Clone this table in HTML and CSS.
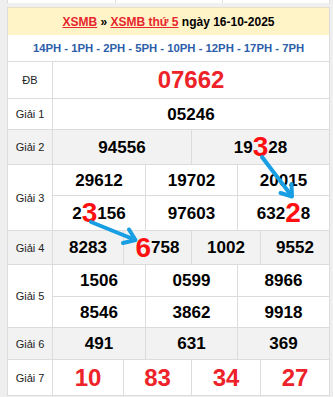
FILE: index.html
```html
<!DOCTYPE html>
<html lang="vi">
<head>
<meta charset="utf-8">
<title>XSMB thứ 5</title>
<link rel="stylesheet" href="styles.css">
</head>
<body>
<div class="page">
  <div class="prev"><span></span><span></span><span></span></div>
  <div class="box">
    <div class="head"><a class="lnk" href="#">XSMB</a> » <a class="lnk" href="#">XSMB thứ 5</a> ngày 16-10-2025</div>
    <div class="ph">14PH - 1PH - 2PH - 5PH - 10PH - 12PH - 17PH - 7PH</div>

    <div class="row r-db">
      <div class="lbl">ĐB</div>
      <div class="nums c1"><div class="cell red big">07662</div></div>
    </div>
    <div class="row r-g1">
      <div class="lbl">Giải 1</div>
      <div class="nums c1"><div class="cell">05246</div></div>
    </div>
    <div class="row alt r-g2">
      <div class="lbl">Giải 2</div>
      <div class="nums c2"><div class="cell">94556</div><div class="cell">19<b class="hl">3</b>28</div></div>
    </div>
    <div class="row r-g3">
      <div class="lbl">Giải 3</div>
      <div class="nums c3 g3">
        <div class="cell">29612</div><div class="cell">19702</div><div class="cell">20015</div>
        <div class="cell">2<b class="hl">3</b>156</div><div class="cell">97603</div><div class="cell">632<b class="hl">2</b>8</div>
      </div>
    </div>
    <div class="row alt r-g4">
      <div class="lbl">Giải 4</div>
      <div class="nums c4">
        <div class="cell">8283</div><div class="cell"><b class="hl">6</b>758</div><div class="cell">1002</div><div class="cell">9552</div>
      </div>
    </div>
    <div class="row r-g5">
      <div class="lbl">Giải 5</div>
      <div class="nums c3 g5">
        <div class="cell">1506</div><div class="cell">0599</div><div class="cell">8966</div>
        <div class="cell">8546</div><div class="cell">3862</div><div class="cell">9918</div>
      </div>
    </div>
    <div class="row alt r-g6">
      <div class="lbl">Giải 6</div>
      <div class="nums c3">
        <div class="cell">491</div><div class="cell">631</div><div class="cell">369</div>
      </div>
    </div>
    <div class="row r-g7 last">
      <div class="lbl">Giải 7</div>
      <div class="nums c4">
        <div class="cell red big">10</div><div class="cell red big">83</div><div class="cell red big">34</div><div class="cell red big">27</div>
      </div>
    </div>
  </div>

  <svg class="arrows" width="333" height="397" viewBox="0 0 333 397">
    <g fill="none" stroke="#189ee3" stroke-width="4" stroke-linecap="round" stroke-linejoin="round">
      <line x1="262" y1="157" x2="291" y2="195"/>
      <polyline points="280.5,193 292,196.5 291.5,184"/>
      <line x1="91" y1="222" x2="133" y2="239"/>
      <polyline points="129,229.5 135.5,240 123,243"/>
    </g>
  </svg>
</div>
</body>
</html>
```

FILE: styles.css
```css
* { box-sizing: border-box; }

html, body {
  margin: 0;
  padding: 0;
  background: #efefef;
}

body {
  font-family: "Liberation Sans", Arial, sans-serif;
  color: #000;
}

.page {
  position: relative;
  width: 333px;
  height: 397px;
  overflow: hidden;
}

.prev {
  margin-left: 7px;
  width: 323px;
  height: 3px;
  display: grid;
  grid-template-columns: 107px 106px 106px;
  gap: 1px;
  background: #dcdcdc;
  border-left: 1px solid #dcdcdc;
  border-right: 1px solid #dcdcdc;
}
.prev span { background: #fff; }

.box {
  margin-top: 4px;
  margin-left: 7px;
  width: 323px;
  border-left: 1px solid #dcdcdc;
  border-right: 1px solid #dcdcdc;
  border-top: 0;
  background: #fff;
}

.head {
  height: 28px;
  background: #fff3c8;
  display: flex;
  align-items: center;
  justify-content: center;
  font-size: 12px;
  font-weight: bold;
  white-space: pre;
  border-top: 1px solid #e6e0c8;
}
.lnk {
  color: #e8262d;
  text-decoration: underline;
}

.ph {
  height: 26px;
  display: flex;
  align-items: center;
  justify-content: center;
  font-size: 11.3px;
  font-weight: bold;
  color: #2c5da9;
  background: #fff;
}

.row {
  display: flex;
  border-top: 1px solid #dcdcdc;
  background: #fff;
}
.row.last { border-bottom: 1px solid #dcdcdc; }

.lbl {
  width: 45px;
  flex: none;
  border-right: 1px solid #dcdcdc;
  display: flex;
  align-items: center;
  justify-content: center;
  font-size: 11px;
  color: #222;
}

.nums {
  flex: 1;
  display: grid;
  gap: 1px;
  background: #dcdcdc;
}
.c1 { grid-template-columns: 1fr; }
.c2 { grid-template-columns: 138px 137px; }
.c3 { grid-template-columns: 92px 91px 91px; }
.c4 { grid-template-columns: 70px 67px 68px 68px; }

.cell {
  background: #fff;
  display: flex;
  align-items: center;
  justify-content: center;
  font-size: 17px;
  font-weight: bold;
  line-height: 1;
  white-space: pre;
}

.alt .lbl, .alt .cell { background: #f2f2f2; }

.red { color: #ee2229; }
.big { font-size: 24px; }

.hl {
  color: #ff1010;
  font-size: 28px;
  line-height: 1;
}

.r-db { height: 37px; }
.r-g1 { height: 31px; }
.r-g2 { height: 35px; }
.r-g3 { height: 66px; }
.g3 { grid-template-rows: 30px 34px; }
.r-g4 { height: 34px; }
.r-g5 { height: 63px; }
.g5 { grid-template-rows: 31px 30px; }
.r-g6 { height: 32px; }
.r-g7 { height: 37px; }

.arrows {
  position: absolute;
  left: 0;
  top: 0;
  pointer-events: none;
}
```
